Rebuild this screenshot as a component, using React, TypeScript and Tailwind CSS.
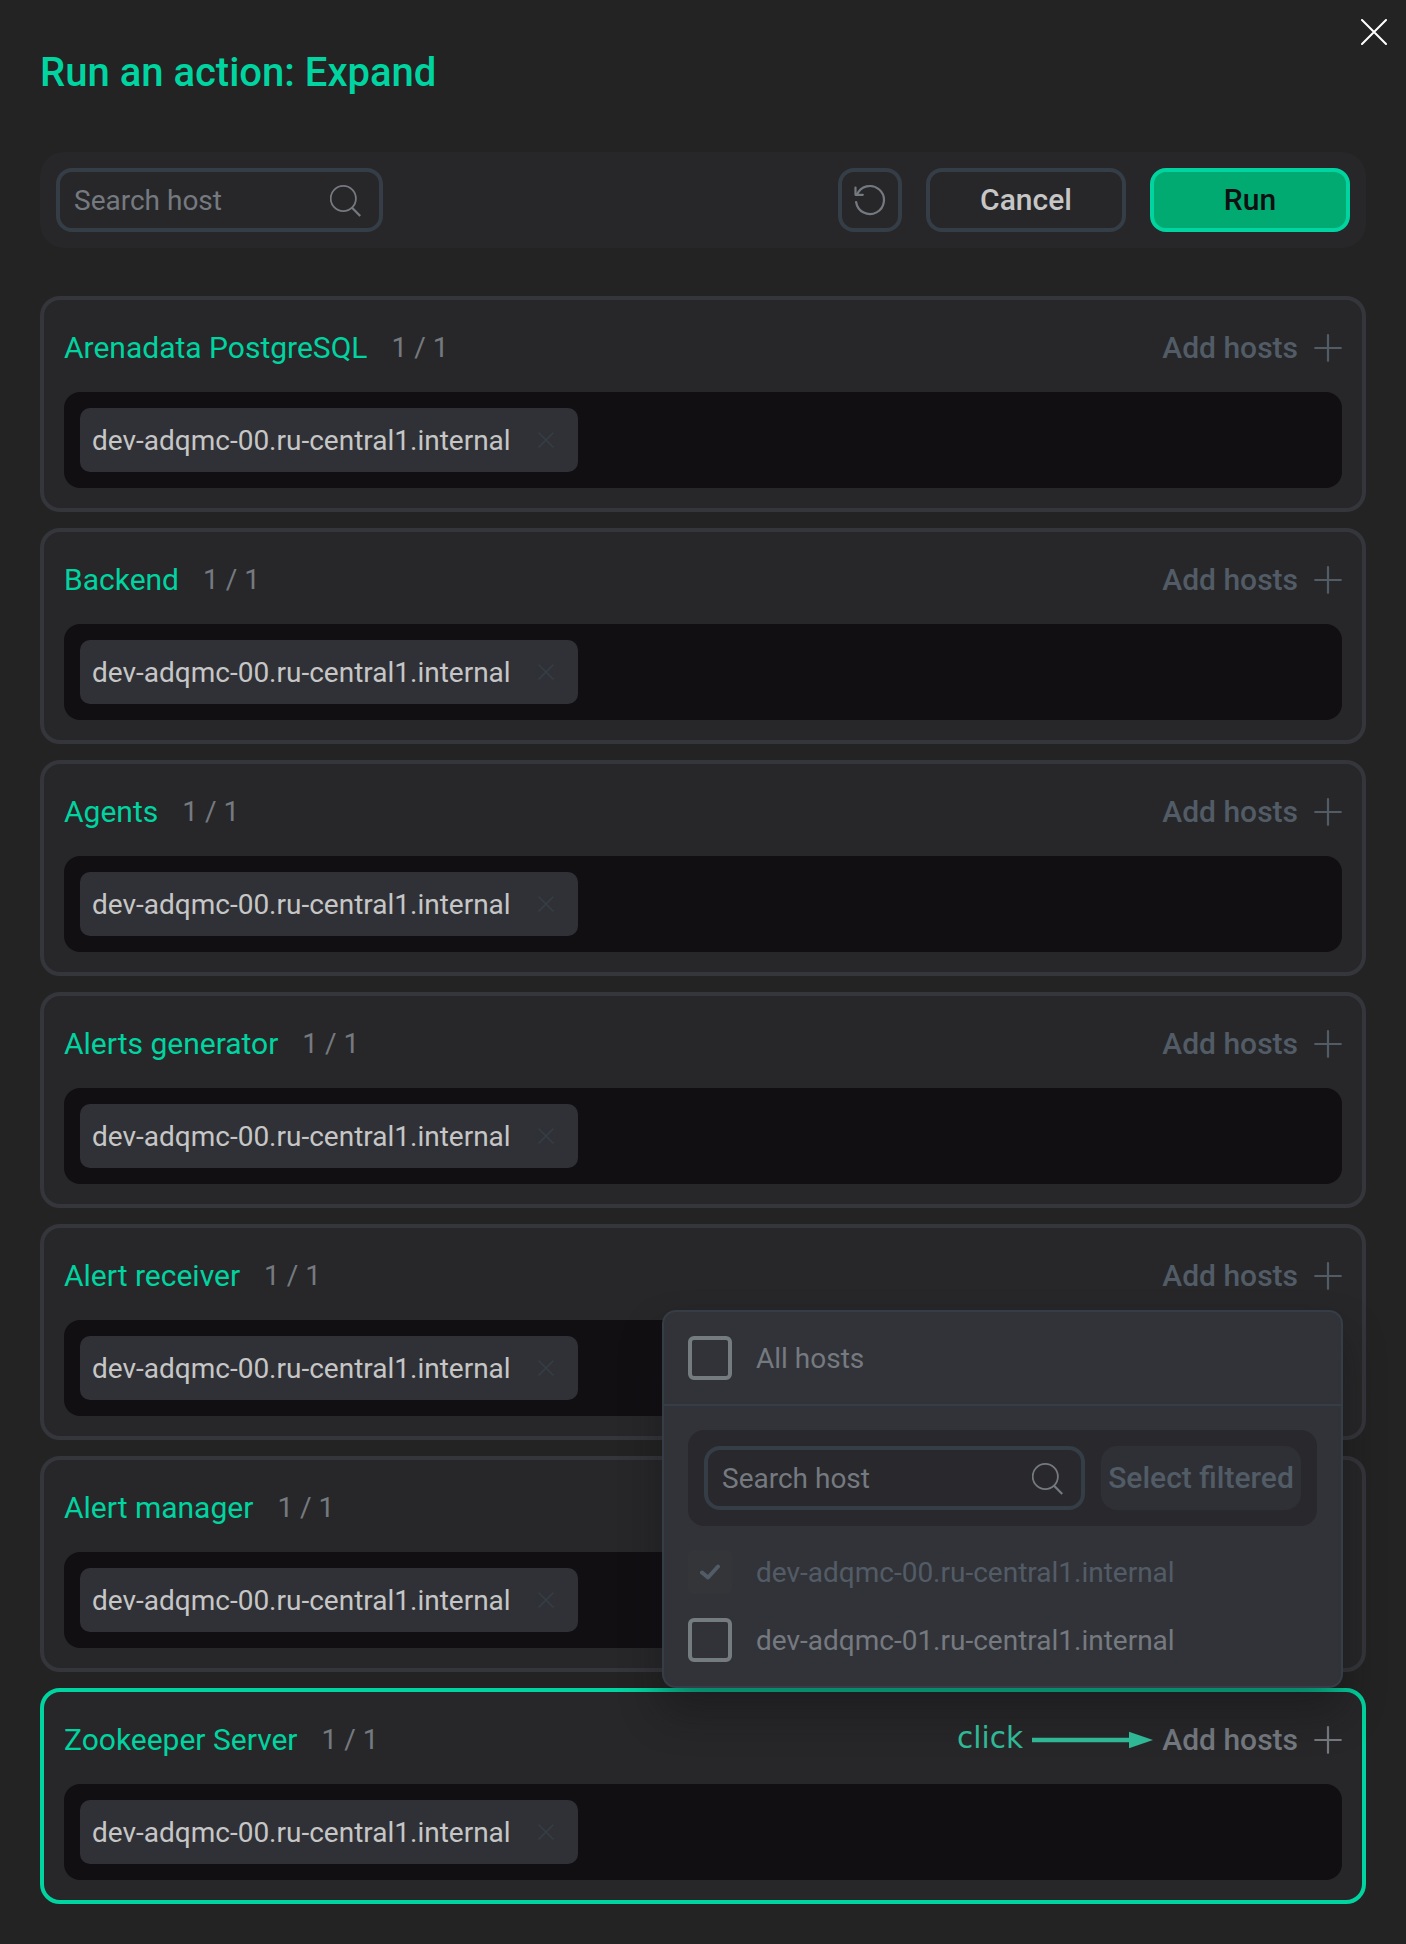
import type { ReactNode } from 'react'

interface Service {
  name: string
  active?: boolean
}

const HOST = 'dev-adqmc-00.ru-central1.internal'

const services: Service[] = [
  { name: 'Arenadata PostgreSQL' },
  { name: 'Backend' },
  { name: 'Agents' },
  { name: 'Alerts generator' },
  { name: 'Alert receiver' },
  { name: 'Alert manager' },
  { name: 'Zookeeper Server', active: true },
]

function SearchIcon() {
  return (
    <svg width="32" height="32" viewBox="0 0 32 32" fill="none" stroke="#757a80" strokeWidth="1.8">
      <circle cx="13.3" cy="13.5" r="12.6" />
      <path d="M21.6 22.3 30.2 31" strokeWidth="2.2" />
    </svg>
  )
}

function SearchInput({ className }: { className: string }) {
  return (
    <div
      className={`flex h-16 items-center justify-between rounded-2xl border-4 border-[#353d46] pt-0.5 pr-[17px] pl-3.5 ${className}`}
    >
      <span className="text-[28px] leading-8 text-[#757a80]">Search host</span>
      <SearchIcon />
    </div>
  )
}

function ToolbarButton({ className, children }: { className: string; children: ReactNode }) {
  return (
    <button
      type="button"
      className={`flex h-16 items-center justify-center rounded-2xl border-4 text-[30px] leading-8 font-medium ${className}`}
    >
      {children}
    </button>
  )
}

function Checkbox() {
  return <span className="size-11 rounded-md border-4 border-[#757c80]" />
}

function HostsPopup() {
  return (
    <div className="absolute right-[19px] bottom-full mb-1 w-[681px] rounded-[14px] border-2 border-[#353d46] bg-[#323338] text-[28px] leading-8 text-[#757a80] shadow-[0_24px_40px_rgba(17,15,20,0.42)]">
      <div className="flex items-center gap-6 border-b-2 border-[#353d46] p-6">
        <Checkbox />
        <span className="pt-0.5">All hosts</span>
      </div>
      <div className="flex flex-col gap-6 p-6">
        <div className="flex gap-4 rounded-2xl bg-[#29282d] p-4">
          <SearchInput className="w-[381px]" />
          <div className="flex h-16 w-[200px] items-center justify-center rounded-2xl bg-[#2f3035] text-[30px] font-medium whitespace-nowrap text-[#525c67]">
            Select filtered
          </div>
        </div>
        <div className="flex items-center gap-6 text-[#525c67]">
          <span className="flex size-11 items-center justify-center rounded-md bg-[#343538]">
            <svg width="20" height="16" viewBox="0 0 20 16" fill="none" stroke="#525c67" strokeWidth="4" strokeLinecap="round" strokeLinejoin="round">
              <path d="M2 8.5 8 13.5 18 2.5" />
            </svg>
          </span>
          <span className="pt-0.5">{HOST}</span>
        </div>
        <div className="flex items-center gap-6">
          <Checkbox />
          <span className="pt-0.5">dev-adqmc-01.ru-central1.internal</span>
        </div>
      </div>
    </div>
  )
}

function ClickHint() {
  return (
    <div className="absolute top-[26px] right-[209px] flex items-center gap-[9px] font-['DejaVu_Sans',sans-serif] text-[29.5px] leading-10 text-[#30b896]">
      <span>click</span>
      <svg className="mt-[3px]" width="121" height="18" viewBox="0 0 121 18" fill="#30b896">
        <path d="M0 6.7h97V0.8L121 9 97 17.2V11.3H0z" />
      </svg>
    </div>
  )
}

function ServiceCard({ name, active }: Service) {
  return (
    <section
      className={`relative flex h-[216px] flex-col justify-between rounded-[20px] border-4 bg-[#272729] p-5 ${
        active ? 'border-[#00d4a0]' : 'border-[#35363b]'
      }`}
    >
      <header className="flex h-14 items-center justify-between">
        <div className="flex items-center gap-6">
          <h2 className="text-[30px] leading-10 text-[#00d4a0]">{name}</h2>
          <span className="text-[28px] leading-10 text-[#757a80]">1 / 1</span>
        </div>
        <div className={`flex items-center gap-4 ${active ? 'text-[#757a80]' : 'text-[#525c67]'}`}>
          <span className="text-[30px] leading-10 font-medium">Add hosts</span>
          <svg width="28" height="28" viewBox="0 0 28 28" stroke="currentColor" strokeWidth="2.2" strokeLinecap="round">
            <path d="M14 1.2v25.6M1.2 14h25.6" />
          </svg>
        </div>
      </header>
      <div className="flex h-24 rounded-2xl bg-[#110f12] p-4">
        <div className="flex w-[498px] items-center justify-between rounded-[10px] bg-[#303136] pr-6 pl-3">
          <span className="pt-0.5 text-[28px] leading-8 text-[#c6c6c6]">{HOST}</span>
          <svg width="16" height="16" viewBox="0 0 16 16" stroke="#353d46" strokeWidth="1.6" strokeLinecap="round">
            <path d="M1 1 15 15M15 1 1 15" />
          </svg>
        </div>
      </div>
      {active && (
        <>
          <HostsPopup />
          <ClickHint />
        </>
      )}
    </section>
  )
}

export default function App() {
  return (
    <div className="relative h-[1944px] w-[1406px] bg-[#232323] px-10 pt-[49px] font-['Roboto',sans-serif]">
      <button type="button" aria-label="Close" className="absolute top-[19px] right-[19px]">
        <svg width="26" height="26" viewBox="0 0 26 26" stroke="#fff" strokeWidth="2" strokeLinecap="round">
          <path d="M1 1 25 25M25 1 1 25" />
        </svg>
      </button>
      <h1 className="h-[103px] text-[40px] leading-12 font-medium text-[#00d4a0]">Run an action: Expand</h1>
      <div className="flex items-center justify-between rounded-3xl bg-[#272729] p-4">
        <SearchInput className="w-[327px]" />
        <div className="flex gap-6">
          <ToolbarButton className="w-16 border-[#353d46]">
            <svg width="32" height="32" viewBox="0 0 32 32" fill="none" stroke="#757a80" strokeWidth="2.2" strokeLinecap="round" strokeLinejoin="round">
              <path d="M1.5 3.5v7.3h7.3M2.9 11A14 14 0 1 1 2.1 18" />
            </svg>
          </ToolbarButton>
          <ToolbarButton className="w-[200px] border-[#353d46] text-[#c6c6c6]">Cancel</ToolbarButton>
          <ToolbarButton className="w-[200px] border-[#00d4a0] bg-[#00aa70] text-[#110f12]">Run</ToolbarButton>
        </div>
      </div>
      <main className="mt-12 flex flex-col gap-4">
        {services.map((service) => (
          <ServiceCard key={service.name} {...service} />
        ))}
      </main>
    </div>
  )
}
